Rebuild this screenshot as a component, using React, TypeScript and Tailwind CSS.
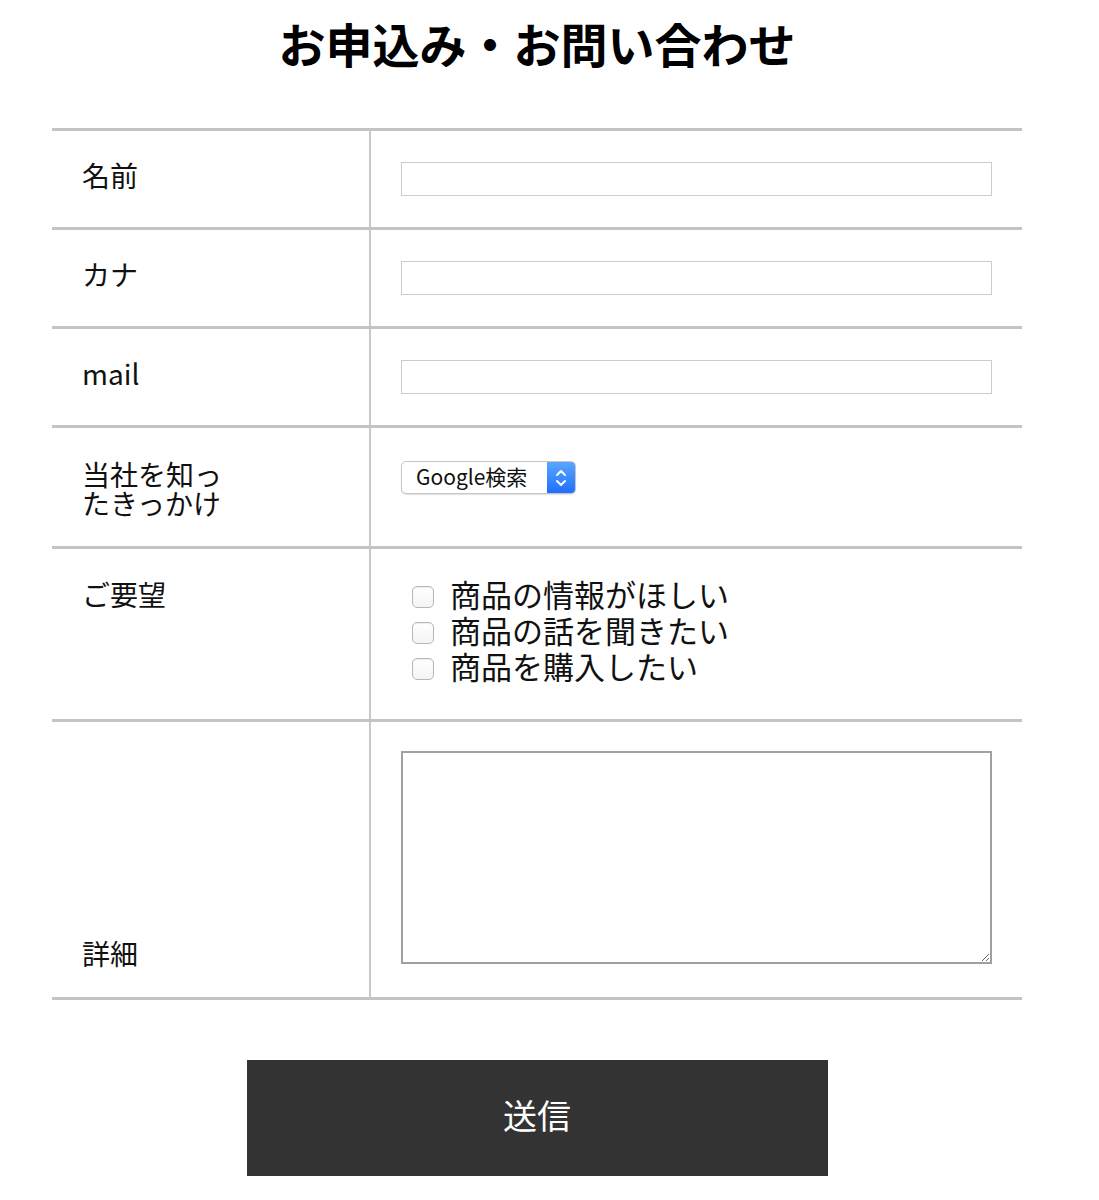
import React from "react";

const font = { fontFamily: '"Noto Sans CJK JP", "Noto Sans", sans-serif' };

function Row({
  label,
  align = "items-center",
  first = false,
  labelClass = "leading-[29px] -mt-[8px]",
  pad = "py-[31px]",
  children,
}: {
  label: React.ReactNode;
  align?: string;
  first?: boolean;
  labelClass?: string;
  pad?: string;
  children: React.ReactNode;
}) {
  return (
    <div
      className={`flex border-b-[3px] border-[#c4c4c4] ${first ? "border-t-[3px]" : ""}`}
    >
      <div
        className={`flex w-[319px] shrink-0 border-r-2 border-[#c8c8c8] px-[30px] ${pad} ${align}`}
      >
        <div className={`text-[28px] text-[#111] ${labelClass}`}>{label}</div>
      </div>
      <div className={`flex-1 px-[30px] ${pad}`}>{children}</div>
    </div>
  );
}

function TextInput() {
  return <input type="text" className="block h-[34px] w-full border border-[#cccccc] bg-white outline-none" />;
}

function Check({ label }: { label: string }) {
  return (
    <label className="flex items-center leading-[36px]">
      <span className="ml-[11px] mr-[16px] mt-[6px] h-[22px] w-[22px] shrink-0 rounded-[5px] border border-[#b8b8b8] bg-gradient-to-b from-white to-[#f4f4f4] shadow-[inset_0_1px_1px_rgba(0,0,0,0.08)]" />
      <span className="text-[31px] text-[#111]">{label}</span>
    </label>
  );
}

export default function App() {
  return (
    <div className="min-h-[1200px] bg-white" style={font}>
      <div className="ml-[52px] flex w-[970px] flex-col">
        <h1 className="mt-[15px] text-center text-[47px] font-bold leading-[56px] text-black">
          お申込み・お問い合わせ
        </h1>

        <div className="mt-[57px]">
          <Row label="名前" first>
            <TextInput />
          </Row>
          <Row label="カナ">
            <TextInput />
          </Row>
          <Row label="mail">
            <TextInput />
          </Row>
          <Row
            label={
              <>
                当社を知っ
                <br />
                たきっかけ
              </>
            }
            align="items-start"
            labelClass="leading-[29px] mt-[1px] -mb-[3px]"
          >
            <div className="mt-[2px] flex h-[33px] w-[175px] overflow-hidden rounded-[5px] border border-[#c6c6c6] bg-white shadow-[0_1px_1px_rgba(0,0,0,0.12)]">
              <span className="flex flex-1 items-center pl-[14px] pb-[2px] text-[21px] text-[#111]">Google検索</span>
              <span className="flex w-[28px] items-center justify-center bg-gradient-to-b from-[#5aa6ff] to-[#1f6dff]">
                <svg width="12" height="20" viewBox="0 0 12 20" fill="none" stroke="white" strokeWidth="2" strokeLinecap="round" strokeLinejoin="round">
                  <path d="M2 7l4-4 4 4" />
                  <path d="M2 13l4 4 4-4" />
                </svg>
              </span>
            </div>
          </Row>
          <Row label="ご要望" align="items-start" labelClass="leading-[36px]" pad="pt-[27px] pb-[35px]">
            <div className="flex flex-col">
              <Check label="商品の情報がほしい" />
              <Check label="商品の話を聞きたい" />
              <Check label="商品を購入したい" />
            </div>
          </Row>
          <Row label="詳細" align="items-end" labelClass="leading-[29px] -mb-[4px]" pad="pt-[29px] pb-[33px]">
            <textarea className="block h-[213px] w-full resize border-2 border-[#a0a0a0] bg-white outline-none" />
          </Row>
        </div>

        <button className="mx-auto mt-[60px] flex h-[116px] w-[581px] items-center justify-center bg-[#333333] pb-[8px] text-[34px] text-white">
          送信
        </button>
      </div>
    </div>
  );
}
